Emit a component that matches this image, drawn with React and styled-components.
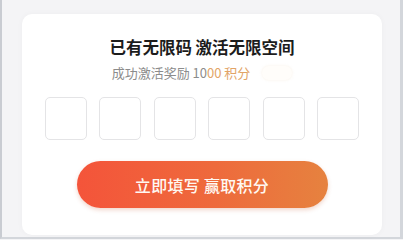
import React from 'react';
import styled, { createGlobalStyle } from 'styled-components';

const GlobalStyle = createGlobalStyle`
  html, body {
    margin: 0;
    padding: 0;
    background: #f4f4f6;
  }
  body {
    font-family: "Noto Sans CJK SC", "Noto Sans", sans-serif;
  }
`;

const CODE_LENGTH = 6;

const App = () => {
  return (
    <>
      <GlobalStyle />
      <Page>
        <Card>
          <Title>已有无限码 激活无限空间</Title>
          <SubLine>
            <Subtitle>
              成功激活奖励 10<Highlight>00 积分</Highlight>
            </Subtitle>
            <Ghost />
          </SubLine>
          <CodeRow>
            {Array.from({ length: CODE_LENGTH }).map((_, i) => (
              <CodeBox key={i} />
            ))}
          </CodeRow>
          <ActionButton type="button">立即填写 赢取积分</ActionButton>
        </Card>
      </Page>
    </>
  );
};

export default App;

// Styled Components
const Page = styled.div`
  width: 403px;
  height: 239px;
  box-sizing: border-box;
  padding: 14px 18px 2px 20px;
  border-left: 2px solid #c9ccd2;
  border-right: 3px solid #d3d6db;
  border-bottom: 2px solid #d3d6db;
  background: #f4f4f6;
  display: flex;
`;

const Card = styled.div`
  flex: 1;
  background: #ffffff;
  border-radius: 10px;
  box-shadow: 0 0 6px rgba(0, 0, 0, 0.03);
  display: flex;
  flex-direction: column;
  align-items: center;
  padding-top: 22px;
`;

const Title = styled.h2`
  margin: 0;
  font-size: 16.5px;
  line-height: 22px;
  font-weight: 700;
  color: #1c1c1c;
`;

const SubLine = styled.div`
  display: flex;
  align-items: center;
  gap: 12px;
  margin-top: 5px;
`;

const Subtitle = styled.p`
  margin: 0;
  font-size: 13px;
  line-height: 20px;
  color: #8c8c8c;
`;

const Highlight = styled.span`
  color: #e2a466;
`;

const Ghost = styled.span`
  width: 30px;
  height: 14px;
  border-radius: 7px;
  background: #fffdfa;
  box-shadow: 0 0 3px rgba(230, 200, 160, 0.25);
`;

const CodeRow = styled.div`
  display: flex;
  gap: 12.6px;
  margin-top: 14px;
`;

const CodeBox = styled.div`
  width: 40px;
  height: 41px;
  border: 1px solid #e4e4e6;
  border-radius: 5px;
  background: #fff;
`;

const ActionButton = styled.button`
  margin-top: 21px;
  width: 251px;
  height: 47px;
  border: none;
  border-radius: 24px;
  background: linear-gradient(90deg, #f4543a 0%, #ee6a3c 55%, #e6823f 100%);
  box-shadow: 0 2px 4px rgba(200, 90, 50, 0.25);
  color: #fff8f2;
  font-family: "Noto Sans CJK SC", "Noto Sans", sans-serif;
  font-size: 16px;
  font-weight: 500;
  letter-spacing: 0.3px;
  cursor: pointer;
`;
